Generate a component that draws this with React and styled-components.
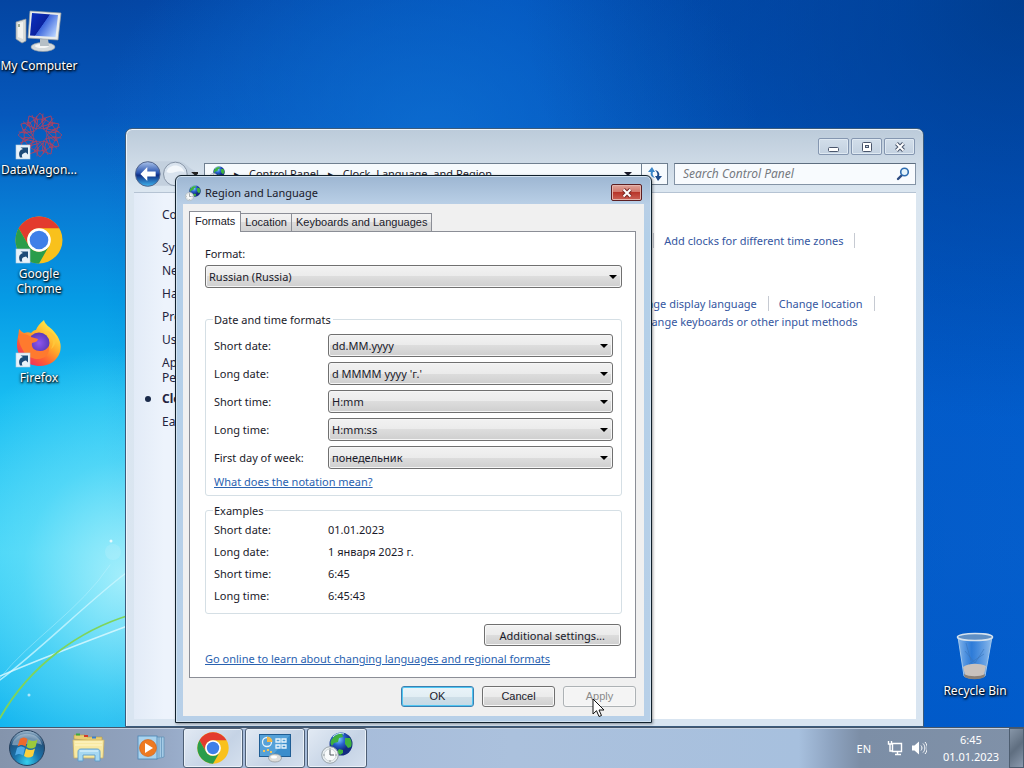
import React from 'react';
import styled, { createGlobalStyle } from 'styled-components';

const GlobalStyle = createGlobalStyle`
  * {
    box-sizing: border-box;
  }
  body {
    margin: 0;
    font-family: 'Noto Sans', 'Open Sans', sans-serif;
    font-size: 11px;
    line-height: 15px;
    color: #1a1a2a;
  }
  button, input, select {
    font: inherit;
    color: inherit;
  }
`;

const Screen = styled.div`
  position: relative;
  display: flex;
  flex-direction: column;
  min-height: 100vh;
  overflow: hidden;
  background:
    radial-gradient(ellipse 200px 230px at 12% 75%, rgba(175, 242, 252, 0.9), rgba(120, 230, 250, 0.5) 50%, rgba(60, 210, 245, 0) 100%),
    radial-gradient(ellipse 330px 260px at 42% 18%, rgba(16, 116, 214, 0.7), rgba(0, 90, 200, 0) 100%),
    linear-gradient(90deg, rgba(0, 84, 192, 0) 10%, rgba(0, 84, 192, 0.8) 50%, rgba(0, 78, 184, 0) 100%),
    linear-gradient(90deg, rgba(0, 84, 192, 0) 20%, rgba(0, 72, 172, 0.3) 60%, rgba(0, 84, 200, 0.92) 88%),
    linear-gradient(180deg, #0445a2, #0658bc 15%, #087bd4 27%, #069be5 39%, #18bdf2 52%, #38d0f6 72%, #08b0ee 94%);
`;

const Shade = styled.div`
  position: absolute;
  inset: 0;
  background: radial-gradient(ellipse 500px 420px at 100% 0, rgba(0, 48, 110, 0.6), rgba(0, 60, 150, 0) 100%);
`;

const Streaks = styled.svg`
  position: absolute;
  left: 0;
  bottom: 0;
`;

const Area = styled.main`
  position: relative;
  flex: 1;
`;

const Shortcuts = styled.nav`
  display: flex;
  flex-direction: column;
  width: 78px;
`;

const Shortcut = styled.a`
  display: flex;
  flex-direction: column;
  align-items: center;
  gap: 2px;
  width: 78px;
  height: 104px;
  padding-top: 8px;
  color: #fff;
  font-size: 12px;
  text-align: center;
  text-decoration: none;
  text-shadow: 1px 1px 2px #000, 0 1px 3px #000;
`;

const Bin = styled(Shortcut)`
  position: absolute;
  right: 10px;
  bottom: 29px;
  height: auto;
  padding-top: 0;
  white-space: nowrap;
`;

const Explorer = styled.section`
  position: absolute;
  top: 128px;
  right: 100px;
  bottom: 0;
  left: 125px;
  display: flex;
  flex-direction: column;
  padding: 0 7px 7px 8px;
  border: 1px solid #3b5b7c;
  border-radius: 7px 7px 0 0;
  background: linear-gradient(180deg, #bccbda, #dbe6f0 60px, #d9e5f1);
  box-shadow: inset 0 1px #eef5fb, inset 1px 0 #eef5fb;
`;

const WindowButtons = styled.div`
  display: flex;
  justify-content: flex-end;
  gap: 2px;
  padding: 9px 1px 0;
`;

const WindowButton = styled.button`
  display: flex;
  align-items: center;
  justify-content: center;
  width: 31px;
  height: 17px;
  padding: 0;
  border: 1px solid #8496b0;
  border-radius: 2px;
  background: linear-gradient(180deg, #d2deea, #c3d1e0);
  box-shadow: inset 0 0 0 1px #dfe9f2;
`;

const CloseButton = styled(WindowButton)`
  border-color: #5c1f22;
  background: linear-gradient(180deg, #e0a49a, #d0766a 48%, #b8352a 50%, #cc6257);
  box-shadow: inset 0 0 0 1px #e5b4ac;
`;

const AddressRow = styled.div`
  display: flex;
  align-items: center;
  gap: 6px;
  height: 38px;
  border-bottom: 1px solid #b5c3d3;
`;

const NavArrows = styled.div`
  display: flex;
  width: 64px;
`;

const Breadcrumbs = styled.div`
  display: flex;
  flex: 1;
  align-items: center;
  gap: 9px;
  height: 22px;
  padding-left: 4px;
  border: 1px solid #6f7f90;
  background: #f6fafd;
  white-space: nowrap;
`;

const Refresh = styled.button`
  display: flex;
  align-items: center;
  justify-content: center;
  align-self: stretch;
  width: 26px;
  padding: 0;
  border: 0;
  border-left: 1px solid #6f7f90;
  background: transparent;
`;

const Caret = styled.span`
  margin-left: auto;
  border: 4px solid transparent;
  border-top-color: #1a1a2a;
  border-bottom: 0;
`;

const Search = styled.label`
  display: flex;
  align-items: center;
  width: 242px;
  height: 22px;
  padding: 0 5px 0 8px;
  border: 1px solid #8494a6;
  border-top-color: #5e6e80;
  background: #f8fbfe;
`;

const SearchInput = styled.input`
  flex: 1;
  min-width: 0;
  padding: 0;
  border: 0;
  outline: 0;
  background: transparent;
  font-size: 12px;
  font-style: italic;
  &::placeholder {
    color: #75797f;
    opacity: 1;
  }
`;

const ExplorerBody = styled.div`
  display: flex;
  flex: 1;
  overflow: hidden;
  background: #fff;
`;

const Categories = styled.ul`
  display: flex;
  flex: 0 0 200px;
  flex-direction: column;
  gap: 8px;
  margin: 0;
  padding: 14px 0 0 28px;
  list-style: none;
  background: linear-gradient(90deg, #e2ebf7, #edf3fc 30px);
  font-size: 12px;
  color: #24243f;
`;

const Category = styled.li`
  display: flex;
  align-items: center;
  gap: 11px;
  font-weight: ${(p) => (p.$current ? 'bold' : 'normal')};
  margin-top: ${(p) => (p.$current ? '-2px' : '0')};
  margin-bottom: ${(p) => (p.$home ? '10px' : '0')};
  margin-left: ${(p) => (p.$current ? '-17px' : '0')};
  white-space: pre;
  &::before {
    content: '';
    display: ${(p) => (p.$current ? 'block' : 'none')};
    width: 6px;
    height: 6px;
    border-radius: 50%;
    background: #1a2a4a;
  }
`;

const Tasks = styled.div`
  display: flex;
  flex-direction: column;
  padding: 38px 0 0 72px;
`;

const TaskGroup = styled.div`
  display: flex;
  flex-direction: column;
  margin-bottom: 45px;
`;

const TaskRow = styled.div`
  display: flex;
  align-items: center;
  height: 18px;
`;

const TaskLink = styled.a`
  padding: 0 11px 0 10px;
  border-right: 1px solid ${(p) => (p.$end ? 'transparent' : '#c6cad2')};
  color: #34569f;
  text-decoration: none;
  white-space: nowrap;
`;

const Dialog = styled.form`
  position: absolute;
  top: 175px;
  left: 175px;
  display: flex;
  flex-direction: column;
  padding: 0 7px 6px;
  border: 1px solid #10202c;
  border-radius: 6px 6px 0 0;
  background: linear-gradient(180deg, #9db6d2, #b9cfe6 28px, #b3cfe8 60px, #b8d0e8);
  box-shadow: inset 0 0 0 1px #d3e3f1, 1px 1px 3px rgba(0, 0, 0, 0.4);
`;

const TitleBar = styled.header`
  display: flex;
  align-items: center;
  gap: 4px;
  height: 28px;
  padding: 5px 2px 0;
`;

const Title = styled.h1`
  flex: 1;
  margin: 0;
  font-size: 11px;
  font-weight: normal;
`;

const Client = styled.div`
  padding: 7px 8px 9px 6px;
  background: #f0f0f0;
`;

const Tabs = styled.div`
  display: flex;
  align-items: flex-end;
  height: 20px;
`;

const Tab = styled.button`
  position: relative;
  height: ${(p) => (p.$active ? '21px' : '18px')};
  margin-bottom: ${(p) => (p.$active ? '-1px' : '0')};
  padding: ${(p) => (p.$active ? '0 5px 2px' : '0 4px')};
  border: 1px solid #8b8e96;
  border-bottom: 0;
  border-left-width: ${(p) => (p.$active ? '1px' : '0')};
  background: ${(p) => (p.$active ? '#fff' : 'linear-gradient(180deg, #f2f2f2, #ebebeb 50%, #dcdcdc 50%, #d2d2d2)')};
  font-family: 'Liberation Sans', Arial, sans-serif;
`;

const Panel = styled.div`
  display: flex;
  flex-direction: column;
  width: 447px;
  padding: 14px 13px 11px 15px;
  border: 1px solid #8b8e96;
  background: #fff;
`;

const SelectBox = styled.div`
  position: relative;
  &::after {
    content: '';
    position: absolute;
    top: 10px;
    right: 5px;
    border: 4px solid transparent;
    border-top-color: #000;
    border-bottom: 0;
    pointer-events: none;
  }
`;

const Select = styled.select`
  display: block;
  width: 100%;
  height: 23px;
  padding: 0 20px 0 3px;
  border: 1px solid #707070;
  border-radius: 3px;
  appearance: none;
  background: linear-gradient(180deg, #f2f2f2, #ebebeb 50%, #dddddd 50%, #cfcfcf);
  box-shadow: inset 0 0 0 1px #f6f6f6;
`;

const FormatField = styled.div`
  display: flex;
  flex-direction: column;
  gap: 4px;
`;

const Group = styled.fieldset`
  display: flex;
  flex-direction: column;
  gap: 5px;
  min-width: 0;
  margin: 24px 0 0;
  padding: 7px 8px 6px;
  border: 1px solid #d5dfe5;
  border-radius: 3px;
`;

const ExampleGroup = styled(Group)`
  gap: 7px;
  margin-top: 7px;
  padding: 4px 8px 10px;
`;

const Legend = styled.legend`
  margin-left: -1px;
  padding: 0 2px 0 1px;
`;

const Field = styled.div`
  display: grid;
  grid-template-columns: 114px 1fr;
  align-items: center;
`;

const HelpLink = styled.a`
  align-self: flex-start;
  color: #2a62b0;
  text-decoration: underline;
`;

const Button = styled.button`
  height: 21px;
  min-width: 73px;
  padding: 0 14px;
  border: 1px solid #707070;
  border-radius: 3px;
  background: linear-gradient(180deg, #f2f2f2, #ebebeb 50%, #dddddd 50%, #cfcfcf);
  box-shadow: inset 0 0 0 1px #f8f8f8;
  font-family: 'Liberation Sans', Arial, sans-serif;
  &:disabled {
    border-color: #adb2b5;
    background: #f4f4f4;
    color: #8a8a8a;
  }
`;

const SettingsButton = styled(Button)`
  align-self: flex-end;
  height: 22px;
  margin: 10px 1px 5px 0;
  padding: 0 15px;
  font-family: inherit;
`;

const DefaultButton = styled(Button)`
  border-color: #3c7fb1;
  background: linear-gradient(180deg, #eaf4f9, #e2eef4 50%, #cfdfe8 50%, #c4dae6);
  box-shadow: inset 0 0 0 1px #4fc6f2;
`;

const Actions = styled.div`
  display: flex;
  justify-content: flex-end;
  gap: 8px;
  padding-top: 8px;
`;

const Pointer = styled.svg`
  position: absolute;
  top: 698px;
  left: 592px;
`;

const Taskbar = styled.footer`
  position: relative;
  display: flex;
  align-items: stretch;
  height: 41px;
  padding-left: 3px;
  border-top: 1px solid #45566b;
  background: linear-gradient(90deg, #8494ac, #91a3bf 14%, #a4b9d8 22%, #abc1dd 50%, #a7c0de 78%, #8fa5c2 81%, #7c8ea6 84%, #8091a8);
  box-shadow: inset 0 1px #c3d1e2;
  color: #fff;
`;

const TaskButton = styled.button`
  display: flex;
  align-items: center;
  justify-content: center;
  width: 60px;
  margin-right: 2px;
  padding: 0;
  border: 1px solid ${(p) => (p.$open ? '#4e5f75' : 'transparent')};
  border-radius: 3px;
  background: ${(p) => (p.$open ? 'linear-gradient(135deg, #e2eaf4, #c5d3e5 60%, #d5e0ee)' : 'transparent')};
  box-shadow: ${(p) => (p.$open ? 'inset 0 0 0 1px #eaf1f8' : 'none')};
`;

const StartButton = styled(TaskButton)`
  width: 48px;
  margin-right: 8px;
`;

const Tray = styled.div`
  display: flex;
  align-items: center;
  gap: 8px;
  margin-left: auto;
`;

const Clock = styled.time`
  width: 60px;
  margin-left: 6px;
  line-height: 17px;
  text-align: center;
`;

const Language = styled.span`
  margin-right: 8px;
`;

const ShowDesktop = styled.button`
  align-self: stretch;
  width: 15px;
  padding: 0;
  border: 1px solid #4d5d70;
  background: linear-gradient(135deg, #8796a8, #5f6e80 50%, #8b9aae);
`;

const ShortcutArrow = () => (
  <g>
    <rect x="1" y="33" width="14" height="14" fill="#e8f2fa" stroke="#b9cfe2" strokeWidth=".6" />
    <path d="M5 45.500C3 41 4.500 38 8 37L5.500 35.500H13V42.500L11 40.500C7.500 41 6 43 7.500 45.500z" fill="#1d4b78" />
  </g>
);

const ChromeLogo = ({ size, arrow }) => (
  <svg width={size} height={size} viewBox="0 0 48 48" aria-hidden="true">
    <circle cx="24" cy="24" r="23.500" fill="#f9c11c" />
    <path d="M3.650 12.250A23.500 23.500 0 0 1 44.350 12.250H24A11.750 11.750 0 0 0 13.820 29.870z" fill="#e33b2e" />
    <path d="M3.650 12.250A23.500 23.500 0 0 0 24 47.500L34.180 29.870A11.750 11.750 0 0 1 13.820 29.870z" fill="#2a9d4b" />
    <circle cx="24" cy="24" r="11.800" fill="#fff" />
    <circle cx="24" cy="24" r="9.300" fill="#3f7fe8" />
    {arrow && <ShortcutArrow />}
  </svg>
);

const FirefoxLogo = () => (
  <svg width="48" height="48" viewBox="0 0 48 48" aria-hidden="true">
    <defs>
      <linearGradient id="fox" x1=".85" y1=".1" x2=".2" y2=".95">
        <stop offset="0" stopColor="#fff04a" />
        <stop offset=".4" stopColor="#ffab2a" />
        <stop offset=".7" stopColor="#ff6033" />
        <stop offset="1" stopColor="#ee2b63" />
      </linearGradient>
      <radialGradient id="globe">
        <stop offset="0" stopColor="#8f55f0" />
        <stop offset="1" stopColor="#5a3ab8" />
      </radialGradient>
    </defs>
    <path d="M29 0c1 5 6 7 9.500 11C45 18 47 25 45 32c-3 9-11 14-20 14C12 46 2 37 2 25c0-5 1.500-9 2-16 2 2 3 3 5 4 3-1 5-1 7 0 2-2 3-3 5-3 1-3 4-7 8-10z" fill="url(#fox)" />
    <circle cx="24" cy="23" r="10.500" fill="url(#globe)" />
    <path d="M3 16c5-3 9-2 13 1l7 2c0 2-2 3-6 4-1 5 3 8 8 8 4 0 7-2 9-5 1 8-4 13-11 13-9 0-17-6-20-23z" fill="#ff7a2e" />
    <path d="M31 11c7 4 9 11 5 18 9-7 5-17-5-18z" fill="#ffc63a" />
    <ShortcutArrow />
  </svg>
);

const ComputerIcon = () => (
  <svg width="48" height="48" viewBox="0 0 48 48" aria-hidden="true">
    <defs>
      <linearGradient id="glass" x1="0" y1=".2" x2="1" y2=".8">
        <stop offset="0" stopColor="#0b2fbb" />
        <stop offset=".45" stopColor="#0a22a0" />
        <stop offset=".47" stopColor="#3c66dc" />
        <stop offset="1" stopColor="#b8d4ff" />
      </linearGradient>
    </defs>
    <path d="M1 14l10-3v22l-4 2-6-4z" fill="#d9dcda" stroke="#8d9498" strokeWidth=".7" />
    <path d="M3 15l5-1v17l-5-2z" fill="#f2f3f0" />
    <path d="M4 16v3" stroke="#49623a" />
    <ellipse cx="28" cy="39" rx="12" ry="4.500" fill="#d5dadd" stroke="#8f999f" strokeWidth=".6" />
    <ellipse cx="27" cy="38" rx="7" ry="2" fill="#f5f6f6" />
    <path d="M25 31h8l1 7h-9z" fill="#b6bfc6" />
    <path d="M15 3l31 2-3 27-30-2z" fill="#e9eceb" stroke="#969ea2" strokeWidth=".7" />
    <path d="M17 5l26 2-2.500 22L15 27.500z" fill="url(#glass)" />
  </svg>
);

const petals = [0, 30, 60, 90, 120, 150, 180, 210, 240, 270, 300, 330];

const MandalaIcon = () => (
  <svg width="48" height="48" viewBox="0 0 48 48" aria-hidden="true">
    <g fill="none" stroke="#b0405f" strokeWidth=".8">
      {petals.map((a) => (
        <g key={a} transform={`rotate(${a} 25 23)`}>
          <path d="M25 16L31 8 25 1 19 8zM22 15l10-10M20 11l-3-8" />
        </g>
      ))}
      <circle cx="25" cy="23" r="7" />
      <circle cx="25" cy="23" r="16" />
    </g>
    <ShortcutArrow />
  </svg>
);

const BinIcon = () => (
  <svg width="48" height="50" viewBox="0 0 48 50" aria-hidden="true">
    <defs>
      <linearGradient id="bin" x1="0" x2="1">
        <stop offset="0" stopColor="#a8cdf2" stopOpacity=".8" />
        <stop offset=".4" stopColor="#5a9ce6" stopOpacity=".5" />
        <stop offset="1" stopColor="#b4d5f4" stopOpacity=".8" />
      </linearGradient>
    </defs>
    <path d="M7 6l6 39c4 3 16 3 21 0l7-39z" fill="url(#bin)" stroke="#9fc6ec" />
    <path d="M12 36c6-4 16-4 23-1l-2 9c-5 3-15 3-19 0z" fill="#c9c2bd" />
    <path d="M13 43c5 3 16 3 21 0l-.5 3c-5 3-15 3-20 0z" fill="#8a8077" />
    <path d="M14 20l10 12 9-14M18 33l15-10M15 12l5 18" fill="none" stroke="#3a73b8" strokeWidth=".8" opacity=".7" />
    <ellipse cx="24" cy="6" rx="17.500" ry="3.500" fill="#5f8fc4" stroke="#d5e2ee" strokeWidth="1.600" />
  </svg>
);

const GlobeClock = ({ size }) => (
  <svg width={size} height={size} viewBox="0 0 32 32" aria-hidden="true">
    <defs>
      <radialGradient id="earth" cx=".4" cy=".3">
        <stop offset="0" stopColor="#7fd0ff" />
        <stop offset=".5" stopColor="#2a63d0" />
        <stop offset="1" stopColor="#122a80" />
      </radialGradient>
    </defs>
    <circle cx="20" cy="12" r="11.500" fill="url(#earth)" />
    <path d="M11 7c3-4 7-6 10-5l1 3-4 1-1 4-4 1-2 3c-2-2-2-5 0-7zM24 6l5 0c2 3 2 7 1 9l-3 1-3-4zM18 17l4 1v3l-3 2-3-3z" fill="#3fb03f" />
    <path d="M12 5c3-4 8-4 11-3" stroke="#c7f0e0" fill="none" />
    <circle cx="9" cy="23" r="8.300" fill="#e9eef0" stroke="#9aa5ab" />
    <circle cx="9" cy="23" r="6" fill="#f9fbfb" stroke="#c0c8cc" strokeWidth=".7" />
    <path d="M9 18v5h4M9 16.500v1M9 28.500v1M2.500 23h1M14.500 23h1" stroke="#50595e" fill="none" />
  </svg>
);

const StartOrb = () => (
  <svg width="38" height="38" viewBox="0 0 38 38" aria-hidden="true">
    <defs>
      <radialGradient id="orb" cx=".5" cy=".9" r=".9">
        <stop offset="0" stopColor="#35d0ee" />
        <stop offset=".4" stopColor="#1a73ac" />
        <stop offset=".75" stopColor="#20527d" />
        <stop offset="1" stopColor="#a8c1d6" />
      </radialGradient>
    </defs>
    <circle cx="19" cy="19" r="17.500" fill="url(#orb)" stroke="#25405e" />
    <path d="M4 16C7 1 31 1 34 16 27 11 13 18 4 16z" fill="#d5e2ee" opacity=".45" />
    <path d="M12 10c3-2 5-2 7.500 0l-2 7.500c-3-2-5-2-8 0z" fill="#ee6a2c" />
    <path d="M20.500 10.500c3 2 6 2 9 0l-2 7.500c-3 2-6 2-9 0z" fill="#9bc93c" />
    <path d="M9 19c3-2 5-2 8 0l-2 7.500c-3-2-5-2-8 0z" fill="#4fa9e6" />
    <path d="M18 19.500c3 2 6 2 9 0l-2 7.500c-3 2-6 2-9 0z" fill="#fcd03c" />
  </svg>
);

const FolderIcon = () => (
  <svg width="34" height="30" viewBox="0 0 34 30" aria-hidden="true">
    <path d="M2 6V2h11l2 2h15v5z" fill="#e9cf74" stroke="#b79a44" strokeWidth=".6" />
    <path d="M4 1.500h4" stroke="#3caa3c" strokeWidth="2" />
    <path d="M12 3h4" stroke="#d23b2b" strokeWidth="2" />
    <path d="M20 4.500h4" stroke="#3a7fd0" strokeWidth="2" />
    <path d="M1 7h31l-1 18H2z" fill="#f8e9a2" stroke="#cdb264" strokeWidth=".8" />
    <path d="M3 12h27M3 9h27" stroke="#fff6cc" />
    <path d="M6 28V19c0-2 1-3 3-3h16c2 0 3 1 3 3v9h-5v-6H11v6z" fill="#a6d8f2" stroke="#5f9cc9" strokeWidth=".9" />
    <path d="M8 18h18" stroke="#e5f7ff" />
  </svg>
);

const MediaIcon = () => (
  <svg width="28" height="26" viewBox="0 0 28 26" aria-hidden="true">
    <path d="M19 2h8v20l-8 2z" fill="#a5cbe6" stroke="#5c8fb6" strokeWidth=".7" />
    <path d="M22 2v21M24.500 2v20" stroke="#5c8fb6" strokeWidth=".7" />
    <rect x="1" y="1" width="19" height="23" fill="#a9d3ee" stroke="#4a86b4" strokeWidth=".8" />
    <circle cx="11" cy="13" r="8.500" fill="#ee7a22" stroke="#c9601a" strokeWidth=".6" />
    <path d="M8 8l8 5-8 5z" fill="#fff" />
  </svg>
);

const PanelIcon = () => (
  <svg width="34" height="30" viewBox="0 0 34 30" aria-hidden="true">
    <rect x="1.500" y="1.500" width="31" height="22" fill="#3a8dcc" stroke="#1f5d94" />
    <path d="M2 2h30L14 23H2z" fill="#6fb6e4" opacity=".5" />
    <circle cx="9" cy="9" r="4.500" fill="none" stroke="#e6f3fb" strokeWidth="1.300" />
    <path d="M9 9V3.500a5.500 5.500 0 0 1 5.500 5.500z" fill="#f2b84a" />
    <path d="M6 17v2M10 16v2M13 18v2" stroke="#f2c45a" strokeWidth="2" />
    <path d="M18 6h4v3h-4zM24 6h4v3h-4zM18 12h4v3h-4zM24 12h4v3h-4z" fill="none" stroke="#e8f4fc" strokeWidth="1.300" />
    <ellipse cx="17" cy="25" rx="6.500" ry="4" fill="#dcdcda" stroke="#8e9294" strokeWidth=".7" />
    <ellipse cx="16" cy="24" rx="3" ry="1.500" fill="#fff" />
  </svg>
);

const categories = [
  'Control Panel Home',
  'System and Security',
  'Network and Internet',
  'Hardware and Sound',
  'Programs',
  'User Accounts',
  'Appearance and\nPersonalization',
  'Clock, Language, and Region',
  'Ease of Access',
];

const taskGroups = [
  [
    ['Set time and date', 'Change the time zone', 'Add clocks for different time zones'],
  ],
  [
    ['Install or uninstall display languages', 'Change display language', 'Change location'],
    ['Change the date, time or number style', 'Change keyboards or other input methods'],
  ],
];

const formats = [
  ['short-date', 'Short date:', 'dd.MM.yyyy'],
  ['long-date', 'Long date:', "d MMMM yyyy 'г.'"],
  ['short-time', 'Short time:', 'H:mm'],
  ['long-time', 'Long time:', 'H:mm:ss'],
  ['first-day', 'First day of week:', 'понедельник'],
];

const examples = [
  ['Short date:', '01.01.2023'],
  ['Long date:', '1 января 2023 г.'],
  ['Short time:', '6:45'],
  ['Long time:', '6:45:43'],
];

const CloseGlyph = ({ stroke }) => (
  <svg width="12" height="10" viewBox="0 0 12 10" aria-hidden="true">
    <path d="M2.500 1.500l7 7M9.500 1.500l-7 7" stroke={stroke} strokeWidth="4" />
    <path d="M2.500 1.500l7 7M9.500 1.500l-7 7" stroke="#fff" strokeWidth="2" />
  </svg>
);

const ExplorerWindow = () => (
  <Explorer>
    <WindowButtons>
      <WindowButton aria-label="Minimize">
        <svg width="12" height="10" viewBox="0 0 12 10">
          <rect x=".5" y="5.500" width="10" height="4" rx="1" fill="#fff" stroke="#4a566c" />
        </svg>
      </WindowButton>
      <WindowButton aria-label="Maximize">
        <svg width="12" height="10" viewBox="0 0 12 10">
          <rect x="1.500" y=".5" width="9" height="9" rx="1" fill="#fff" stroke="#4a566c" />
          <rect x="4.500" y="3.500" width="3" height="2" fill="#c6d4e2" stroke="#4a566c" />
        </svg>
      </WindowButton>
      <WindowButton aria-label="Close"><CloseGlyph stroke="#4a566c" /></WindowButton>
    </WindowButtons>
    <AddressRow>
      <NavArrows>
        <svg width="65" height="28" viewBox="0 0 65 28" aria-hidden="true">
          <defs>
            <linearGradient id="back" x1="0" x2="0" y1="0" y2="1">
              <stop offset="0" stopColor="#a9c2ea" />
              <stop offset=".45" stopColor="#2c56b0" />
              <stop offset=".55" stopColor="#0f2f86" />
              <stop offset="1" stopColor="#3fb4ee" />
            </linearGradient>
          </defs>
          <path d="M14 1h30c8 0 10 6 18 10v6c-8 4-10 9-18 9H14z" fill="#c3d0de" />
          <circle cx="14" cy="14" r="12.500" fill="url(#back)" stroke="#51648a" />
          <path d="M6.500 14l7-7v4.500H22v5h-8.500V21z" fill="#fff" />
          <circle cx="42" cy="14" r="12" fill="#d9e3ee" stroke="#8593a5" />
          <path d="M33 12c2-9 16-9 18 0-6-3-12 3-18 0z" fill="#f3f7fb" />
          <path d="M58 12h9l-4.500 4z" fill="#222" />
        </svg>
      </NavArrows>
      <Breadcrumbs>
        <GlobeClock size={16} />
        <span>▸</span>
        <span>Control Panel</span>
        <span>▸</span>
        <span>Clock, Language, and Region</span>
        <Caret />
        <Refresh aria-label="Refresh">
          <svg width="16" height="16" viewBox="0 0 16 16">
            <path d="M8 12C4 11 3 8 4 6H1l4-5 3 5H6c-1 2 0 4 2 6z" fill="#3b86c8" />
            <path d="M8 4c4 1 5 4 4 6h3l-4 5-3-5h2c1-2 0-4-2-6z" fill="#1c4a8a" />
          </svg>
        </Refresh>
      </Breadcrumbs>
      <Search>
        <SearchInput type="text" placeholder="Search Control Panel" aria-label="Search Control Panel" />
        <svg width="14" height="14" viewBox="0 0 14 14" aria-hidden="true">
          <path d="M6 8L2 12" stroke="#2c4a80" strokeWidth="2.400" strokeLinecap="round" />
          <circle cx="8.500" cy="5" r="3.800" fill="#e3f3fb" stroke="#2d6cb0" strokeWidth="1.600" />
        </svg>
      </Search>
    </AddressRow>
    <ExplorerBody>
      <Categories>
        {categories.map((name, i) => (
          <Category key={name} $home={i === 0} $current={i === 7}>{name}</Category>
        ))}
      </Categories>
      <Tasks>
        {taskGroups.map((rows) => (
          <TaskGroup key={rows[0][0]}>
            {rows.map((row) => (
              <TaskRow key={row[0]}>
                {row.map((name, n) => <TaskLink key={name} href="#" $end={row.length === 2 && n === 1}>{name}</TaskLink>)}
              </TaskRow>
            ))}
          </TaskGroup>
        ))}
      </Tasks>
    </ExplorerBody>
  </Explorer>
);

const RegionDialog = () => (
  <Dialog onSubmit={(e) => e.preventDefault()}>
    <TitleBar>
      <GlobeClock size={16} />
      <Title>Region and Language</Title>
      <CloseButton type="button" aria-label="Close"><CloseGlyph stroke="#7a2a28" /></CloseButton>
    </TitleBar>
    <Client>
      <Tabs role="tablist">
        <Tab type="button" role="tab" aria-selected="true" $active>Formats</Tab>
        <Tab type="button" role="tab" aria-selected="false">Location</Tab>
        <Tab type="button" role="tab" aria-selected="false">Keyboards and Languages</Tab>
      </Tabs>
      <Panel>
        <FormatField>
          <label htmlFor="format">Format:</label>
          <SelectBox>
            <Select id="format"><option>Russian (Russia)</option></Select>
          </SelectBox>
        </FormatField>
        <Group>
          <Legend>Date and time formats</Legend>
          {formats.map(([id, label, value]) => (
            <Field key={id}>
              <label htmlFor={id}>{label}</label>
              <SelectBox>
                <Select id={id}><option>{value}</option></Select>
              </SelectBox>
            </Field>
          ))}
          <HelpLink href="#">What does the notation mean?</HelpLink>
        </Group>
        <ExampleGroup>
          <Legend>Examples</Legend>
          {examples.map(([label, value]) => (
            <Field key={label}>
              <span>{label}</span>
              <span>{value}</span>
            </Field>
          ))}
        </ExampleGroup>
        <SettingsButton type="button">Additional settings...</SettingsButton>
        <HelpLink href="#">Go online to learn about changing languages and regional formats</HelpLink>
      </Panel>
      <Actions>
        <DefaultButton type="submit">OK</DefaultButton>
        <Button type="button">Cancel</Button>
        <Button type="button" disabled>Apply</Button>
      </Actions>
    </Client>
  </Dialog>
);

const App = () => (
  <Screen>
    <GlobalStyle />
    <Shade />
    <Streaks width="180" height="240" viewBox="0 528 180 240" aria-hidden="true">
      <g fill="none" strokeLinecap="round">
        <path d="M0 680C40 650 90 600 126 573" stroke="#c9f6ff" strokeWidth="1.500" opacity=".8" />
        <path d="M0 678C30 640 80 610 110 565" stroke="#c9f6ff" opacity=".4" />
        <path d="M0 676C50 655 90 640 130 625" stroke="#e0faff" strokeWidth="1.600" opacity=".8" />
        <path d="M0 718C30 665 80 630 130 615" stroke="#7fd45a" strokeWidth="1.800" />
      </g>
      <circle cx="113" cy="552" r="8" fill="#fff" opacity=".12" />
      <circle cx="111" cy="541" r="1.500" fill="#fff" opacity=".8" />
      <circle cx="29" cy="695" r="1.500" fill="#fff" opacity=".6" />
    </Streaks>
    <Area>
      <Shortcuts>
        <Shortcut href="#"><ComputerIcon />My Computer</Shortcut>
        <Shortcut href="#"><MandalaIcon />DataWagon...</Shortcut>
        <Shortcut href="#"><ChromeLogo size={48} arrow />Google Chrome</Shortcut>
        <Shortcut href="#"><FirefoxLogo />Firefox</Shortcut>
      </Shortcuts>
      <Bin href="#"><BinIcon />Recycle Bin</Bin>
      <ExplorerWindow />
      <RegionDialog />
    </Area>
    <Taskbar>
      <StartButton aria-label="Start"><StartOrb /></StartButton>
      <TaskButton aria-label="Windows Explorer"><FolderIcon /></TaskButton>
      <TaskButton aria-label="Media Player"><MediaIcon /></TaskButton>
      <TaskButton $open aria-label="Google Chrome"><ChromeLogo size={32} /></TaskButton>
      <TaskButton $open aria-label="Control Panel"><PanelIcon /></TaskButton>
      <TaskButton $open aria-label="Region and Language"><GlobeClock size={32} /></TaskButton>
      <Tray>
        <Language>EN</Language>
        <svg width="16" height="16" viewBox="0 0 16 16" aria-hidden="true">
          <path d="M5.500 3.500h9v8h-9zM8 14.500h6M10.500 12v2M1.500 1v3h3V1M3 4v7h2" fill="none" stroke="#fff" strokeWidth="1.400" />
        </svg>
        <svg width="16" height="16" viewBox="0 0 16 16" aria-hidden="true">
          <path d="M1 5.500h2.500L8 1.500v13l-4.500-4H1z" fill="#fff" />
          <path d="M10 5.500c1.300 1.500 1.300 3.500 0 5M12 3.500c2.500 2.500 2.500 6.500 0 9M14 2c3 3.500 3 8.500 0 12" fill="none" stroke="#fff" />
        </svg>
        <Clock>6:45<br />01.01.2023</Clock>
        <ShowDesktop aria-label="Show desktop" />
      </Tray>
    </Taskbar>
    <Pointer width="13" height="21" viewBox="0 0 13 21" aria-hidden="true">
      <path d="M1 1v15l3.500-3.300L7 18.500l2.500-1L7 12h5z" fill="#fff" stroke="#111" />
    </Pointer>
  </Screen>
);

export default App;
